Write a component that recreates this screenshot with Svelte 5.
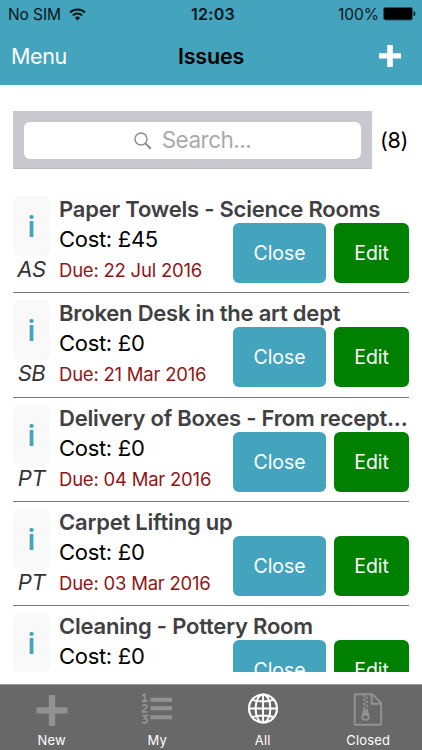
<script lang="ts">
	type Issue = { title: string; cost: string; due: string; initials: string };

	const issues: Issue[] = [
		{ title: 'Paper Towels - Science Rooms', cost: '£45', due: '22 Jul 2016', initials: 'AS' },
		{ title: 'Broken Desk in the art dept', cost: '£0', due: '21 Mar 2016', initials: 'SB' },
		{ title: 'Delivery of Boxes - From recept...', cost: '£0', due: '04 Mar 2016', initials: 'PT' },
		{ title: 'Carpet Lifting up', cost: '£0', due: '03 Mar 2016', initials: 'PT' },
		{ title: 'Cleaning - Pottery Room', cost: '£0', due: '', initials: '' }
	];
	const tabs = ['New', 'My', 'All', 'Closed'];
	const total = 8;
	let activeTab = $state('All');
</script>

<div class="screen">
	<header>
		<div class="status">
			<div class="carrier">
				<span>No SIM</span>
				<svg width="17" height="13" viewBox="0 0 17 13" fill="none" stroke="#07161a">
					<path d="M1 4.5a10.8 10.8 0 0 1 15 0" stroke-width="2" />
					<path d="M3.8 7.4a6.8 6.8 0 0 1 9.4 0" stroke-width="2" />
					<path d="M8.5 12.4 5.9 9.8a3.8 3.8 0 0 1 5.2 0z" fill="#07161a" stroke="none" />
				</svg>
			</div>
			<span class="time">12:03</span>
			<div class="power">
				<span>100%</span>
				<svg width="33" height="14" viewBox="0 0 33 14">
					<rect x=".5" y=".5" width="29" height="12.5" rx="2" fill="#000" stroke="#235865" />
					<path d="M31 4.5c1.3.4 1.3 4.1 0 4.5z" fill="#000" stroke="#10313a" />
				</svg>
			</div>
		</div>
		<div class="nav">
			<button class="menu">Menu</button>
			<h1>Issues</h1>
			<button class="add" aria-label="Add issue">
				<svg width="22" height="22" viewBox="0 0 22 22">
					<path d="M8.2 0h5.6v8.2H22v5.4h-8.2V22H8.2v-8.4H0V8.2h8.2z" fill="#fff" />
				</svg>
			</button>
		</div>
	</header>

	<div class="search-row">
		<div class="search-bar">
			<div class="search-field">
				<svg width="18" height="18" viewBox="0 0 18 18" fill="none" stroke="#8a8a8e">
					<circle cx="7" cy="7" r="6" stroke-width="1.4" />
					<path d="m11.4 11.4 5.4 5.4" stroke-width="2" />
				</svg>
				<span>Search...</span>
			</div>
		</div>
		<span class="total">({total})</span>
	</div>

	<main>
		{#each issues as issue}
			<article>
				<div class="side">
					<div class="info">i</div>
					{#if issue.initials}
						<span class="initials">{issue.initials}</span>
					{/if}
				</div>
				<div class="body">
					<h2>{issue.title}</h2>
					<div class="details">
						<div class="facts">
							<p class="cost">Cost: {issue.cost}</p>
							{#if issue.due}
								<p class="due">Due: {issue.due}</p>
							{/if}
						</div>
						<button class="close">Close</button>
						<button class="edit">Edit</button>
					</div>
				</div>
			</article>
		{/each}
	</main>

	<footer>
		{#each tabs as tab}
			<button class="tab" class:active={tab === activeTab} onclick={() => (activeTab = tab)}>
				<svg width="34" height="34" viewBox="0 0 34 34" fill="none" stroke="currentColor">
					{#if tab === 'New'}
						<path d="M1.5 17.4h31M17 2v31" stroke-width="6.4" />
					{:else if tab === 'My'}
						<path d="M10.5 6.8H32M10.5 15.3H32M10.5 24.2H32" stroke-width="4" />
						<path
							d="M2.3 2.6 4.7 1.5v6.3M2 8h5.4M2.3 13.4c.5-2.2 4.6-1.9 4.6.2 0 1.8-4.6 3.6-4.6 5.2h5.2M2.3 22.7h4.7l-2.6 3c4.3 0 3.4 4.8-.3 4.3-.9-.1-1.6-.5-1.9-1.2"
							stroke-width="1.8"
						/>
					{:else if tab === 'All'}
						<circle cx="17" cy="15.5" r="14" stroke-width="2.1" />
						<ellipse cx="17" cy="15.5" rx="7.4" ry="14" stroke-width="2" />
						<path
							d="M17 1.5v28M3 15.5h28M6 6.6c5.5 2.5 16.5 2.5 22 0M6 24.4c5.5-2.5 16.5-2.5 22 0"
							stroke-width="1.9"
						/>
					{:else}
						<path
							d="M4.7 1.2h16.5l9 9v20.5a1 1 0 0 1-1 1H4.7a1 1 0 0 1-1-1V2.2a1 1 0 0 1 1-1zM20.7 1.2v9.6h9.4"
							stroke-width="1.9"
						/>
						<path d="M13.2 2v15M15.8 3.7v13.5" stroke-width="2.2" stroke-dasharray="2 2" />
						<path
							fill="currentColor"
							fill-rule="evenodd"
							stroke="none"
							d="M12.4 16.5h4.2l2 6.7c.7 2.7-1.4 4.6-4.1 4.6s-4.8-1.9-4.1-4.6zM12 24.2c0 2.3 5 2.3 5 0s-5-2.3-5 0z"
						/>
					{/if}
				</svg>
				<span>{tab}</span>
			</button>
		{/each}
	</footer>
</div>

<style>
	:global(body) {
		margin: 0;
	}
	.screen {
		display: flex;
		flex-direction: column;
		width: 422px;
		height: 750px;
		overflow: hidden;
		background: #fff;
		color: #000;
		font-family: Inter, 'Liberation Sans', sans-serif;
	}
	button {
		margin: 0;
		padding: 0;
		border: 0;
		background: none;
		color: #fff;
		font: inherit;
	}
	svg {
		display: block;
		flex: none;
	}
	h1,
	h2,
	p {
		margin: 0;
	}
	header {
		flex: none;
		height: 85px;
		background: #44a3bd;
	}
	.status,
	.nav {
		display: grid;
		grid-template-columns: 1fr auto 1fr;
		align-items: center;
	}
	.status {
		height: 28px;
		padding: 0 6px 0 8px;
		font-size: 15.5px;
		color: #07161a;
	}
	.carrier,
	.power {
		display: flex;
		align-items: center;
		gap: 8px;
	}
	.carrier {
		letter-spacing: -0.1px;
	}
	.power {
		justify-content: flex-end;
		gap: 4px;
	}
	.time {
		padding-left: 2px;
		font-weight: 600;
		font-size: 16px;
		letter-spacing: 0.3px;
	}
	.nav {
		height: 55px;
		padding: 0 11px;
	}
	.menu {
		justify-self: start;
		font-size: 21.5px;
		letter-spacing: -0.4px;
	}
	h1 {
		font-size: 21.5px;
		font-weight: 600;
		letter-spacing: -0.2px;
	}
	.add {
		justify-self: end;
		margin-right: 10px;
	}
	.search-row {
		display: flex;
		flex: none;
		align-items: center;
		gap: 8px;
		margin: 26px 0 0 13px;
	}
	.search-bar {
		box-sizing: border-box;
		width: 359px;
		height: 58px;
		padding: 11px 11px 10px;
		border-bottom: 1px solid #bdbcc2;
		background: #c9c8ce;
	}
	.search-field {
		display: flex;
		align-items: center;
		justify-content: center;
		gap: 10px;
		height: 37px;
		border-radius: 6px;
		background: #fff;
		color: #aaa;
		font-size: 22.5px;
		letter-spacing: -0.5px;
	}
	.search-field span {
		padding-bottom: 2px;
	}
	.total {
		font-size: 21.5px;
		letter-spacing: -0.3px;
	}
	main {
		flex: none;
		height: 483px;
		margin: 20px 13px 0;
		overflow: hidden;
	}
	article {
		display: flex;
		gap: 9px;
		box-sizing: border-box;
		height: 104.3px;
		padding-top: 7px;
		border-bottom: 1px solid #777;
	}
	.side {
		flex: none;
		width: 37px;
		text-align: center;
	}
	.info {
		height: 60px;
		border-radius: 6px;
		background: #f9f9f9;
		color: #44a3bd;
		font-size: 28px;
		font-weight: 600;
		line-height: 62px;
	}
	.initials {
		font-size: 22px;
		font-style: italic;
		letter-spacing: -0.5px;
		line-height: 27px;
		color: #333;
	}
	.body {
		flex: 1;
		min-width: 0;
	}
	h2 {
		height: 27px;
		color: #404042;
		font-size: 22px;
		font-weight: 600;
		letter-spacing: -0.22px;
		line-height: 27px;
		white-space: nowrap;
	}
	.details {
		display: flex;
		gap: 8px;
	}
	.facts {
		flex: 1;
		white-space: nowrap;
	}
	.cost {
		font-size: 22px;
		letter-spacing: -0.3px;
		line-height: 33px;
	}
	.due {
		color: #8f1616;
		font-size: 18.5px;
		letter-spacing: -0.22px;
		line-height: 28px;
	}
	.close,
	.edit {
		flex: none;
		height: 60px;
		border-radius: 6px;
		font-size: 19.5px;
		letter-spacing: -0.1px;
	}
	.close {
		width: 93px;
		background: #44a3bd;
	}
	.edit {
		width: 75px;
		background: #008000;
	}
	footer {
		display: flex;
		box-sizing: border-box;
		height: 66px;
		margin-top: auto;
		border-top: 1px solid #999;
		background: #686868;
	}
	.tab {
		display: flex;
		flex: 1;
		flex-direction: column;
		align-items: center;
		padding: 8px 2px 0 0;
		color: #929292;
		font-size: 13px;
	}
	.tab span {
		margin-top: 5px;
		color: #fff;
		line-height: 17px;
		letter-spacing: 0.2px;
	}
	.tab.active {
		color: #fff;
	}
</style>
